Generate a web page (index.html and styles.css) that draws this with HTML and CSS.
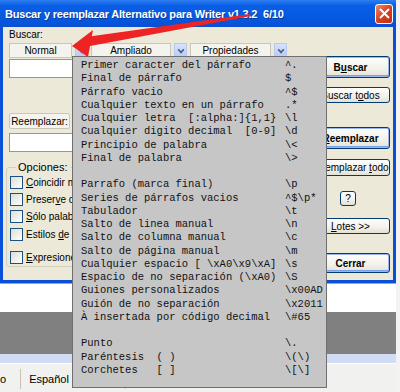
FILE: index.html
```html
<!DOCTYPE html>
<html lang="es">
<head>
    <meta charset="UTF-8">
    <title>Buscar y reemplazar</title>
    <link rel="stylesheet" href="styles.css">
</head>
<body>
    <div class="window">
        <div class="titlebar">
            <span class="title">Buscar y reemplazar Alternativo para Writer v1.3.2&nbsp; 6/10</span>
            <span class="close">
                <svg width="11" height="11" viewBox="0 0 11 11"><path d="M1 1 L10 10 M10 1 L1 10" stroke="#fff" stroke-width="2"/></svg>
            </span>
        </div>
        <div class="dialog">
            <div class="left">
                <div class="label">Buscar:</div>
                <div class="modes">
                    <button class="btn mode w-normal">Normal</button>
                    <span class="drop"></span>
                    <button class="btn mode w-ampl">Ampliado</button>
                    <span class="drop"></span>
                    <button class="btn mode w-prop">Propiedades</button>
                    <span class="drop"></span>
                </div>
                <div class="field"></div>
                <button class="btn small label-btn">Reemplazar:</button>
                <div class="field field-2"></div>
                <fieldset class="options">
                    <legend>Opciones:</legend>
                    <div class="opt"><span class="check"></span><span><u>C</u>oincidir mayúsculas</span></div>
                    <div class="opt"><span class="check"></span><span>Preser<u>v</u>e caso</span></div>
                    <div class="opt"><span class="check"></span><span><u>S</u>ólo palabras</span></div>
                    <div class="opt opt-b"><span class="check"></span><span>Estilos <u>d</u>e párrafo</span></div>
                    <div class="opt opt-c"><span class="check"></span><span><u>E</u>xpresiones</span></div>
                </fieldset>
            </div>
            <div class="right">
                <button class="btn default b-find">B<u>u</u>scar</button>
                <button class="btn b-findall">Buscar t<u>o</u>dos</button>
                <button class="btn default b-repl"><u>R</u>eemplazar</button>
                <button class="btn b-replall">Reemplazar <u>t</u>odo</button>
                <button class="btn help">?</button>
                <button class="btn b-batch"><u>L</u>otes &gt;&gt;</button>
                <button class="btn default b-close">Cerrar</button>
            </div>
        </div>
    </div>

    <div class="desk">
        <div class="doc"></div>
        <div class="gray"></div>
        <div class="ruler"></div>
        <div class="status">
            <span class="cell first">o</span>
            <span class="cell">Español (España)</span>
        </div>
    </div>

    <div class="menu">
        <div class="row"><span>Primer caracter del párrafo</span><span>^.</span></div>
        <div class="row"><span>Final de párrafo</span><span>$</span></div>
        <div class="row"><span>Párrafo vacio</span><span>^$</span></div>
        <div class="row"><span>Cualquier texto en un párrafo</span><span>.*</span></div>
        <div class="row"><span>Cualquier letra  [:alpha:]{1,1}</span><span>\l</span></div>
        <div class="row"><span>Cualquier digito decimal  [0-9]</span><span>\d</span></div>
        <div class="row"><span>Principio de palabra</span><span>\&lt;</span></div>
        <div class="row"><span>Final de palabra</span><span>\&gt;</span></div>
        <div class="row"></div>
        <div class="row"><span>Parrafo (marca final)</span><span>\p</span></div>
        <div class="row"><span>Series de párrafos vacios</span><span>^$\p*</span></div>
        <div class="row"><span>Tabulador</span><span>\t</span></div>
        <div class="row"><span>Salto de linea manual</span><span>\n</span></div>
        <div class="row"><span>Salto de columna manual</span><span>\c</span></div>
        <div class="row"><span>Salto de página manual</span><span>\m</span></div>
        <div class="row"><span>Cualquier espacio [ \xA0\x9\xA]</span><span>\s</span></div>
        <div class="row"><span>Espacio de no separación (\xA0)</span><span>\S</span></div>
        <div class="row"><span>Guiones personalizados</span><span>\x00AD</span></div>
        <div class="row"><span>Guión de no separación</span><span>\x2011</span></div>
        <div class="row"><span>À insertada por código decimal</span><span>\#65</span></div>
        <div class="row"></div>
        <div class="row"><span>Punto</span><span>\.</span></div>
        <div class="row"><span>Paréntesis  ( )</span><span>\(\)</span></div>
        <div class="row"><span>Corchetes   [ ]</span><span>\[\]</span></div>
    </div>

    <svg class="arrow" width="400" height="70" viewBox="0 0 400 70">
        <polygon points="86,37 250,14 251,16 90,46" fill="#ee2323"/>
        <polygon points="72,46 93,30 88,57" fill="#ee2323"/>
    </svg>
</body>
</html>
```

FILE: styles.css
```css
body {
    margin: 0;
    width: 400px;
    height: 392px;
    overflow: hidden;
    position: relative;
    background: #f3f3f3;
    font-family: "Liberation Sans", Arial, sans-serif;
    font-size: 10px;
    color: #000;
}
.window {
    width: 396px;
    background: #0a4fd8;
    padding: 0 3px 3px 3px;
    box-sizing: border-box;
}
.titlebar {
    height: 27px;
    margin: 0 -3px;
    padding: 0 3px 0 5px;
    display: flex;
    align-items: center;
    justify-content: space-between;
    background: linear-gradient(#2f7ef2 0%, #0a5fe6 20%, #0458e0 70%, #0a4fd2 100%);
}
.title {
    color: #fff;
    font-weight: bold;
    font-size: 11px;
    letter-spacing: -0.2px;
    text-shadow: 1px 1px 0 #0a3c9a;
}
.close {
    width: 16px;
    height: 18px;
    border: 1px solid #fff;
    border-radius: 3px;
    background: linear-gradient(135deg, #f08a6c, #d8401c 50%, #c33010);
    display: flex;
    align-items: center;
    justify-content: center;
}
.dialog {
    background: #ece9d8;
    display: flex;
    height: 253px;
    padding: 0 3px 0 6px;
}
.left {
    flex: 1;
    min-width: 0;
}
.right {
    width: 79px;
    display: flex;
    flex-direction: column;
}
.label {
    height: 16px;
    line-height: 16px;
}
.btn {
    font-family: inherit;
    font-size: 10px;
    color: #000;
    padding: 0;
    background: linear-gradient(#fefefd, #f2f1ea 60%, #e3e1d6);
    border: 1px solid #003c74;
    border-radius: 3px;
}
.modes {
    display: flex;
    gap: 3px;
    height: 15px;
}
.mode {
    height: 15px;
    border: 1px solid #c9c7ba;
    border-radius: 0;
    background: #f4f3ee;
}
.w-normal { width: 63px; }
.w-ampl { width: 80px; }
.w-prop { width: 81px; }
.drop {
    width: 13px;
    height: 15px;
    box-sizing: border-box;
    border: 1px solid #b8c9f0;
    background: linear-gradient(#d6e2fc, #b5cbf7);
    position: relative;
}
.drop::after {
    content: "";
    position: absolute;
    left: 3px;
    top: 3px;
    width: 4px;
    height: 4px;
    border-right: 2px solid #4d6185;
    border-bottom: 2px solid #4d6185;
    transform: rotate(45deg) scale(0.8);
}
.field {
    height: 19px;
    margin-top: 1px;
    background: #fff;
    border: 1px solid #7f9db9;
    box-sizing: border-box;
}
.field-2 {
    margin-top: 4px;
}
.label-btn {
    display: block;
    width: 61px;
    height: 16px;
    margin-top: 35px;
    border-color: #c9c7ba;
    background: #f4f3ee;
    border-radius: 2px;
}
.options {
    margin: 9px 0 0 -3px;
    padding: 1px 0 0 3px;
    height: 106px;
    box-sizing: border-box;
    border: 1px solid #d0d0bf;
    border-radius: 3px;
}
.options legend {
    font-size: 11px;
    padding: 0 2px;
    margin-left: 6px;
}
.opt {
    display: flex;
    align-items: center;
    gap: 3px;
    height: 17px;
    white-space: nowrap;
}
.opt-b { margin-top: 1px; }
.opt-c { margin-top: 6px; }
.check {
    width: 11px;
    height: 11px;
    border: 1px solid #1c5180;
    background: linear-gradient(135deg, #dcdcd7, #fff);
}
.default {
    font-weight: bold;
    box-shadow: inset 0 0 0 1px #9bb6ee, inset 0 -1px 0 1px #7aa1e6;
}
.b-find { height: 22px; margin-top: 29px; }
.b-findall { height: 16px; margin-top: 9px; }
.b-repl { height: 22px; margin-top: 24px; }
.b-replall { height: 17px; margin-top: 10px; }
.help { width: 16px; height: 15px; margin: 15px 0 0 29px; }
.b-batch { height: 16px; margin-top: 12px; }
.b-close { height: 20px; margin-top: 19px; }
.desk {
    width: 396px;
}
.doc {
    height: 28px;
    background: #fff;
    border-top: 1px solid #aca899;
}
.gray {
    height: 42px;
    background: #808080;
}
.ruler {
    height: 9px;
    background: #cfdcf3;
    border-bottom: 1px solid #fff;
}
.status {
    height: 30px;
    display: flex;
    align-items: center;
    background: #f1f1ef;
    font-size: 11px;
}
.cell {
    padding: 0 8px;
    border-right: 1px solid #c7c5b2;
    height: 20px;
    line-height: 20px;
}
.cell.first {
    padding: 0 14px 0 0;
}
.menu {
    position: absolute;
    left: 72px;
    top: 56px;
    width: 255px;
    height: 332px;
    box-sizing: border-box;
    padding: 2px 0 0 8px;
    background: #c6c6c6;
    border: 1px solid #6f6f6f;
    font-family: "Liberation Mono", "Courier New", monospace;
    font-size: 10.5px;
    color: #111;
}
.row {
    display: grid;
    grid-template-columns: 204px 1fr;
    height: 13.26px;
    line-height: 13.26px;
    white-space: pre;
}
.arrow {
    position: absolute;
    left: 0;
    top: 0;
}
```
